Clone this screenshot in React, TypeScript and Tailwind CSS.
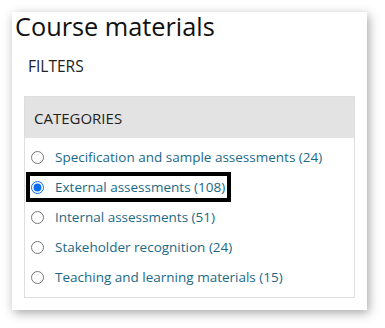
import React from "react";

const items = [
  { label: "Specification and sample assessments (24)", checked: false },
  { label: "External assessments (108)", checked: true },
  { label: "Internal assessments (51)", checked: false },
  { label: "Stakeholder recognition (24)", checked: false },
  { label: "Teaching and learning materials (15)", checked: false },
];

export default function App() {
  return (
    <div className="w-[385px] h-[328px] bg-white p-3" style={{ fontFamily: '"Open Sans", "Noto Sans", sans-serif' }}>
      <div className="w-[355px] h-[298px] bg-white shadow-[2px_3px_10px_rgba(0,0,0,0.35)] flex flex-col">
        <h1 className="text-[25.3px] leading-[26px] text-[#111] pl-[3px] pt-[1px] font-normal">Course materials</h1>
        <div className="text-[15.5px] leading-[20px] text-[#222] pl-[16px] mt-[17px] uppercase">Filters</div>
        <div className="mx-[12px] mt-[20px] h-[202px] border border-[#dedede] flex flex-col">
          <div className="h-[41px] bg-[#e3e3e3] pl-[9px] flex items-center text-[15px] text-[#222] uppercase pt-[1px]">Categories</div>
          <div className="flex flex-col pt-[4px] pl-[1px]">
            {items.map((it) => (
              <div key={it.label} className="flex">
                <label
                  className={`flex items-center h-[30px] pr-[2px] border-[4px] ${it.checked ? "border-black" : "border-transparent"}`}
                >
                  <input type="radio" name="cat" defaultChecked={it.checked} className="m-0 ml-[1px] w-[13px] h-[13px] accent-[#0b6cf0]" />
                  <span className="ml-[11px] text-[13.5px] text-[#1b6987]">{it.label}</span>
                </label>
              </div>
            ))}
          </div>
        </div>
      </div>
    </div>
  );
}
